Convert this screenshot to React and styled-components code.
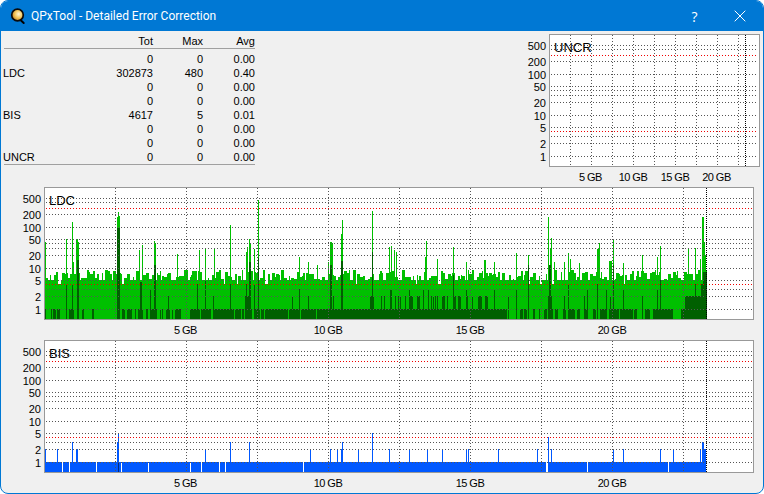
import styled, { createGlobalStyle } from "styled-components";

const FRAME_TOP = 187;
const LDC_LEFT = 44;
const GRID_ROWS = [11, 15, 27, 40, 52, 56, 61, 68, 81, 93, 102, 109, 122];
const RED_ROWS = [21, 97];
const Y_LABELS = [[500, 11], [200, 27], [100, 40], [50, 52], [20, 68], [10, 81], [5, 93], [2, 109], [1, 122]];

const STATS = [
  ["", 0, 0, "0.00"],
  ["LDC", 302873, 480, "0.40"],
  ["", 0, 0, "0.00"],
  ["", 0, 0, "0.00"],
  ["BIS", 4617, 5, "0.01"],
  ["", 0, 0, "0.00"],
  ["", 0, 0, "0.00"],
  ["UNCR", 0, 0, "0.00"],
];

// x, top (page pixels) of the tall green peaks
const LDC_SPIKES = [
  [45, 242], [66, 239], [72, 222], [73, 262], [76, 239], [77, 239], [78, 242], [117, 217], [118, 212], [119, 216],
  [139, 250], [142, 245], [154, 241], [155, 243], [177, 254], [199, 250], [205, 248], [214, 248], [230, 225],
  [246, 252], [247, 247], [249, 239], [250, 243], [254, 249], [258, 200], [299, 257], [308, 262], [317, 265],
  [330, 242], [331, 242], [332, 243], [341, 234], [342, 220], [372, 211], [389, 247], [391, 246], [394, 250],
  [396, 252], [426, 241], [425, 257], [437, 259], [453, 247], [466, 262], [494, 262], [516, 253], [528, 255],
  [548, 217], [550, 249], [551, 238], [554, 262], [564, 262], [568, 253], [579, 263], [597, 249], [598, 249],
  [599, 243], [613, 240], [623, 263], [642, 255], [657, 257], [660, 246], [688, 249], [695, 248], [700, 259],
  [702, 217], [703, 217], [704, 242], [705, 255],
];

// x0, x1, top: dark green bars that rise out of the bottom band
const LDC_DARK = [
  [66, 66, 285], [72, 72, 285], [77, 78, 260], [117, 119, 228], [140, 141, 282], [150, 150, 290], [154, 155, 265],
  [168, 168, 296], [197, 197, 284], [205, 205, 280], [213, 213, 296], [230, 230, 284], [245, 249, 296], [246, 246, 284],
  [249, 250, 262], [254, 254, 285], [258, 258, 258], [292, 292, 296], [299, 299, 289], [308, 308, 296], [330, 331, 265],
  [333, 333, 296], [341, 342, 261], [370, 373, 296], [372, 372, 252], [381, 381, 296], [384, 384, 296], [390, 391, 290],
  [395, 395, 296], [398, 398, 296], [400, 400, 296], [405, 405, 296], [409, 412, 296], [409, 409, 289], [417, 419, 296],
  [423, 423, 290], [428, 428, 290], [435, 435, 296], [431, 431, 296], [433, 433, 296], [437, 437, 296], [442, 444, 296],
  [447, 447, 296], [453, 455, 296], [453, 453, 275], [458, 460, 296], [466, 466, 290], [467, 467, 296], [472, 472, 296],
  [478, 481, 296], [485, 487, 296], [494, 494, 290], [508, 508, 296], [516, 516, 290], [528, 528, 265], [548, 551, 296],
  [549, 550, 265], [564, 564, 296], [568, 568, 284], [584, 584, 296], [587, 587, 290], [597, 597, 284], [606, 606, 290],
  [610, 610, 296], [613, 613, 265], [623, 623, 290], [642, 642, 296], [657, 657, 290], [660, 660, 280], [685, 706, 296],
  [695, 695, 284], [701, 706, 284], [703, 706, 272],
];

// density of dark stripes in the band under the 1 line
const DARK_DENSITY = [
  [45, 115, 0.3], [115, 140, 0.35], [140, 190, 0.5], [190, 240, 0.72], [240, 507, 1], [507, 540, 0.45],
  [540, 600, 0.5], [600, 683, 0.6], [683, 706, 1],
];
const LIGHT_STRIPES = [241, 244, 252, 253, 260, 264, 288, 300, 316, 507];

const BIS_GAPS = [62, 69, 96, 121, 148, 190, 201, 219, 225, 303, 546, 547, 587, 668];
const BIS_SPIKES = [
  [45, 449], [57, 449], [72, 442], [76, 449], [77, 449], [117, 442], [118, 433], [205, 449], [230, 442], [249, 442],
  [310, 449], [330, 449], [337, 449], [341, 449], [342, 442], [358, 449], [372, 433], [389, 449], [409, 449], [427, 449],
  [442, 449], [466, 449], [468, 449], [498, 449], [537, 449], [548, 437], [551, 449], [613, 449], [623, 449], [660, 449],
  [673, 449], [700, 449], [702, 442], [703, 442], [704, 449], [705, 449],
];

function randomizer(seed) {
  let s = seed;
  return () => {
    s = (s * 1664525 + 1013904223) % 4294967296;
    return s / 4294967296;
  };
}

function buildLdc() {
  const rand = randomizer(77);
  const tops = {};
  for (let x = 45; x < 707; ) {
    const w = 1 + Math.floor(rand() * 3);
    const r = rand();
    let top = 279 - Math.floor(rand() * 10);
    if (r < 0.05) top = 284;
    else if (r < 0.32) top = 280;
    else if (r > 0.98) top = 268 - Math.floor(rand() * 10);
    for (let i = 0; i < w; i++) tops[x + i] = top;
    x += w;
  }
  LDC_SPIKES.forEach(([x, top]) => (tops[x] = Math.min(tops[x], top)));

  let light = "";
  for (let x = 45; x < 707; x++) light += `M${x - LDC_LEFT} ${tops[x] - FRAME_TOP}h1V132h-1z`;

  let dark = "";
  DARK_DENSITY.forEach(([from, to, density]) => {
    for (let x = from; x < to; ) {
      const w = density === 1 ? 1 : 1 + Math.floor(rand() * 3);
      const on = rand() < density;
      for (let i = 0; i < w; i++) {
        if (on && !LIGHT_STRIPES.includes(x + i)) dark += `M${x + i - LDC_LEFT} 122h1V132h-1z`;
      }
      x += w;
    }
  });
  LDC_DARK.forEach(([a, b, top]) => {
    dark += `M${a - LDC_LEFT} ${top - FRAME_TOP}H${b + 1 - LDC_LEFT}V132H${a - LDC_LEFT}z`;
  });
  return { light, dark };
}

function buildBis() {
  const top = 462 - 340;
  let path = "";
  for (let x = 45; x < 706; x++) {
    if (!BIS_GAPS.includes(x)) path += `M${x - LDC_LEFT} ${top}h1V132h-1z`;
  }
  BIS_SPIKES.forEach(([x, y]) => {
    path += `M${x - LDC_LEFT} ${y - 340}h1V132h-1z`;
  });
  return path;
}

const ldc = buildLdc();
const bis = buildBis();

function Chart({ gutter, width, name, step, lines, endLine, gbLabels, children }) {
  const columns = Array.from({ length: lines }, (_, i) => step + step * i);
  return (
    <ChartSvg width={gutter + width + 1} height={153}>
      {Y_LABELS.map(([value, row]) => (
        <AxisLabel key={value} x={gutter - 3} y={row + 5}>
          {value}
        </AxisLabel>
      ))}
      <g transform={`translate(${gutter} 0)`}>
        <rect x="0" y="0" width={width} height="132" fill="#fff" />
        {children}
        {GRID_ROWS.map((row) => (
          <GridLine key={row} x1="2" x2={width - 1} y1={row + 0.5} y2={row + 0.5} />
        ))}
        {columns.map((x) => (
          <GridLine key={x} x1={x + 0.5} x2={x + 0.5} y1="1" y2="132" />
        ))}
        {RED_ROWS.map((row) => (
          <LimitLine key={row} x1="2" x2={width - 1} y1={row + 0.5} y2={row + 0.5} />
        ))}
        <EndLine x1={endLine + 0.5} x2={endLine + 0.5} y1="1" y2="132" />
        <Frame x="0.5" y="0.5" width={width} height="132" />
        <Legend x="5" y="18">
          {name}
        </Legend>
        {gbLabels.map(([label, x]) => (
          <GbLabel key={label} x={x} y="147">
            {label}
          </GbLabel>
        ))}
      </g>
    </ChartSvg>
  );
}

function AppIcon() {
  return (
    <svg width="18" height="18" viewBox="0 0 18 18">
      <defs>
        <radialGradient id="lens" cx="0.6" cy="0.42" r="0.65">
          <stop offset="0" stopColor="#fff6d8" />
          <stop offset="0.5" stopColor="#f3c65a" />
          <stop offset="1" stopColor="#b9791c" />
        </radialGradient>
      </defs>
      <path d="M12.5 13l3.2 3" stroke="#000" strokeWidth="2" strokeLinecap="round" />
      <circle cx="9.5" cy="8" r="5.8" fill="url(#lens)" stroke="#0b0b0b" strokeWidth="1.7" />
    </svg>
  );
}

export default function App() {
  return (
    <>
      <GlobalStyle />
      <Window>
        <TitleBar>
          <AppIcon />
          <Title>QPxTool - Detailed Error Correction</Title>
          <HelpButton>?</HelpButton>
          <CloseButton>
            <svg width="12" height="12" viewBox="0 0 12 12">
              <path d="M.7.7l10.6 10.6M11.3.7L.7 11.3" stroke="#fff" strokeWidth="1" fill="none" />
            </svg>
          </CloseButton>
        </TitleBar>
        <Body>
          <TopRow>
            <StatsTable>
              <HeadRow>
                <span />
                <span>Tot</span>
                <span>Max</span>
                <span>Avg</span>
              </HeadRow>
              <StatsBody>
                {STATS.map(([label, tot, max, avg], i) => (
                  <StatRow key={i}>
                    <span>{label}</span>
                    <span>{tot}</span>
                    <span>{max}</span>
                    <span>{avg}</span>
                  </StatRow>
                ))}
              </StatsBody>
            </StatsTable>
            <Chart
              gutter={27}
              width={210}
              name="UNCR"
              step={21}
              lines={9}
              endLine={196}
              gbLabels={[["5 GB", 41.5], ["10 GB", 84], ["15 GB", 126], ["20 GB", 167.5]]}
            />
          </TopRow>
          <WideChart>
            <Chart
              gutter={34}
              width={709}
              name="LDC"
              step={71}
              lines={9}
              endLine={662}
              gbLabels={[["5 GB", 141.5], ["10 GB", 284], ["15 GB", 426], ["20 GB", 568]]}
            >
              <path d={ldc.light} fill="#00c000" shapeRendering="crispEdges" />
              <path d={ldc.dark} fill="#006000" shapeRendering="crispEdges" />
            </Chart>
          </WideChart>
          <WideChart>
            <Chart
              gutter={34}
              width={709}
              name="BIS"
              step={71}
              lines={9}
              endLine={662}
              gbLabels={[["5 GB", 141.5], ["10 GB", 284], ["15 GB", 426], ["20 GB", 568]]}
            >
              <path d={bis} fill="#0058ff" shapeRendering="crispEdges" />
              <path d="M74 122h1V132h-1z" fill="#002a80" shapeRendering="crispEdges" />
            </Chart>
          </WideChart>
        </Body>
      </Window>
    </>
  );
}

const GlobalStyle = createGlobalStyle`
  html, body {
    margin: 0;
    padding: 0;
    background: #fff;
  }
`;

const Window = styled.div`
  box-sizing: border-box;
  width: 764px;
  height: 494px;
  display: flex;
  flex-direction: column;
  background: #f0f0f0;
  border: 1px solid #0078d4;
  border-radius: 8px;
  overflow: hidden;
  font-family: "Liberation Sans", Arial, sans-serif;
  font-size: 11px;
  color: #000;
`;

const TitleBar = styled.div`
  height: 30px;
  flex: none;
  display: flex;
  align-items: center;
  padding-left: 7px;
  background: #0078d4;
  color: #fff;
`;

const Title = styled.div`
  margin-left: 5px;
  font-family: Roboto, sans-serif;
  font-size: 12px;
  flex: 1;
`;

const HelpButton = styled.div`
  width: 45px;
  text-align: center;
  font-family: "Open Sans", sans-serif;
  font-size: 14px;
`;

const CloseButton = styled.div`
  width: 46px;
  display: flex;
  justify-content: center;
  align-items: center;
`;

const Body = styled.div`
  flex: 1;
  display: flex;
  flex-direction: column;
  padding-top: 3px;
`;

const TopRow = styled.div`
  display: flex;
  justify-content: space-between;
  padding: 0 3px 0 2px;
  height: 153px;
`;

const StatsTable = styled.div`
  width: 252px;
`;

const statColumns = `
  display: grid;
  grid-template-columns: 1fr 60px 50px 52px;
  height: 14px;
  line-height: 14px;
  & > span { text-align: right; }
  & > span:first-child { text-align: left; margin-left: -1px; }
`;

const HeadRow = styled.div`
  ${statColumns}
  border-bottom: 1px solid #a0a0a0;
  margin-left: 1px;
`;

const StatsBody = styled.div`
  margin: 3px 0 0 1px;
  border-bottom: 1px solid #a0a0a0;
`;

const StatRow = styled.div`
  ${statColumns}
`;

const WideChart = styled.div`
  padding-left: 9px;
  height: 153px;
`;

const ChartSvg = styled.svg`
  display: block;
  font-family: "Liberation Sans", Arial, sans-serif;
`;

const AxisLabel = styled.text`
  font-size: 11px;
  text-anchor: end;
  fill: #000;
`;

const GbLabel = styled.text`
  font-size: 11px;
  letter-spacing: -0.4px;
  word-spacing: -0.5px;
  text-anchor: middle;
  fill: #000;
`;

const Legend = styled.text`
  font-size: 13px;
  fill: #000;
`;

const GridLine = styled.line`
  stroke: #555;
  stroke-width: 1;
  stroke-dasharray: 1 2;
  shape-rendering: crispEdges;
`;

const LimitLine = styled.line`
  stroke: #f00000;
  stroke-width: 1;
  stroke-dasharray: 1 2;
  shape-rendering: crispEdges;
`;

const EndLine = styled.line`
  stroke: #000;
  stroke-width: 1;
  stroke-dasharray: 1 1;
  shape-rendering: crispEdges;
`;

const Frame = styled.rect`
  fill: none;
  stroke: #999;
  stroke-width: 1;
  shape-rendering: crispEdges;
`;
